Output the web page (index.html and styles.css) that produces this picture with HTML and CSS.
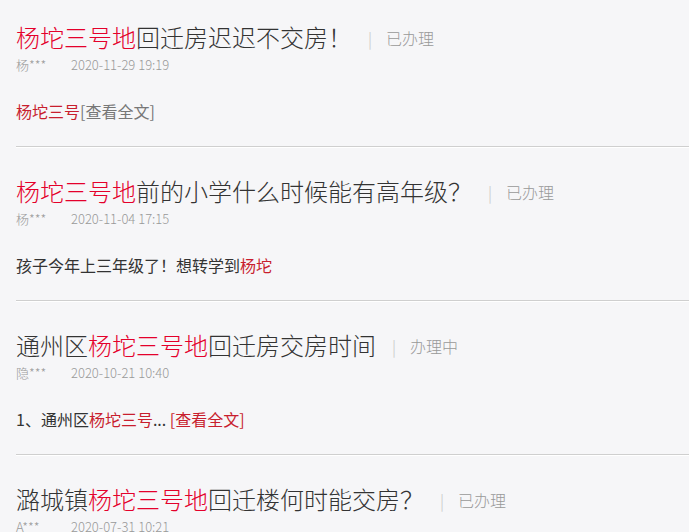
FILE: index.html
```html
<!DOCTYPE html>
<html lang="zh-CN">
<head>
    <meta charset="UTF-8">
    <meta name="viewport" content="width=device-width, initial-scale=1.0">
    <title>留言列表</title>
    <link rel="stylesheet" href="styles.css">
</head>
<body>
    <ul class="msg-list">
        <li class="msg">
            <h3 class="msg-title"><em>杨坨三号地</em>回迁房迟迟不交房！<span class="sep">|</span><span class="status">已办理</span></h3>
            <div class="msg-meta"><span class="user">杨***</span><span class="date">2020-11-29 19:19</span></div>
            <p class="msg-body"><em>杨坨三号</em><a class="more" href="#">[查看全文]</a></p>
        </li>
        <li class="msg">
            <h3 class="msg-title"><em>杨坨三号地</em>前的小学什么时候能有高年级？<span class="sep">|</span><span class="status">已办理</span></h3>
            <div class="msg-meta"><span class="user">杨***</span><span class="date">2020-11-04 17:15</span></div>
            <p class="msg-body">孩子今年上三年级了！想转学到<em>杨坨</em></p>
        </li>
        <li class="msg">
            <h3 class="msg-title">通州区<em>杨坨三号地</em>回迁房交房时间<span class="sep">|</span><span class="status">办理中</span></h3>
            <div class="msg-meta"><span class="user">隐***</span><span class="date">2020-10-21 10:40</span></div>
            <p class="msg-body">1、通州区<em>杨坨三号</em>... <a class="more red" href="#">[查看全文]</a></p>
        </li>
        <li class="msg">
            <h3 class="msg-title">潞城镇<em>杨坨三号地</em>回迁楼何时能交房？<span class="sep">|</span><span class="status">已办理</span></h3>
            <div class="msg-meta"><span class="user">A***</span><span class="date">2020-07-31 10:21</span></div>
        </li>
    </ul>
</body>
</html>
```

FILE: styles.css
```css
body {
    margin: 0;
    background-color: #f6f6f8;
    font-family: "Noto Sans CJK SC", "Open Sans", "Liberation Sans", sans-serif;
    color: #333;
    overflow: hidden;
}
em {
    font-style: normal;
}
.msg-list {
    list-style: none;
    margin: 0;
    padding: 0;
}
.msg {
    margin-left: 16px;
    padding: 26px 0 23px;
    border-bottom: 1px solid #cfcfcf;
    box-shadow: 0 1px 0 #fff;
}
.msg:first-child {
    padding-top: 19px;
}
.msg:last-child {
    border-bottom: none;
    box-shadow: none;
}
.msg-title {
    margin: 0;
    font-size: 24px;
    font-weight: 300;
    line-height: 36px;
    color: #333;
    white-space: nowrap;
}
.msg-title em {
    color: #e4002b;
}
.sep {
    font-size: 16px;
    color: #c4c4c4;
    margin: 0 14px 0 16px;
    vertical-align: 2px;
}
.status {
    font-size: 16px;
    color: #999;
    vertical-align: 2px;
}
.msg-meta {
    font-size: 13px;
    font-weight: 300;
    line-height: 18px;
    color: #999;
}
.msg-meta .user {
    display: inline-block;
    width: 55px;
}
.msg-body {
    margin: 25px 0 0;
    font-size: 16px;
    line-height: 24px;
    color: #333;
}
.msg-body em {
    color: #c81e2e;
}
.more {
    color: #777;
    text-decoration: none;
}
.more.red {
    color: #c81e2e;
}
```
